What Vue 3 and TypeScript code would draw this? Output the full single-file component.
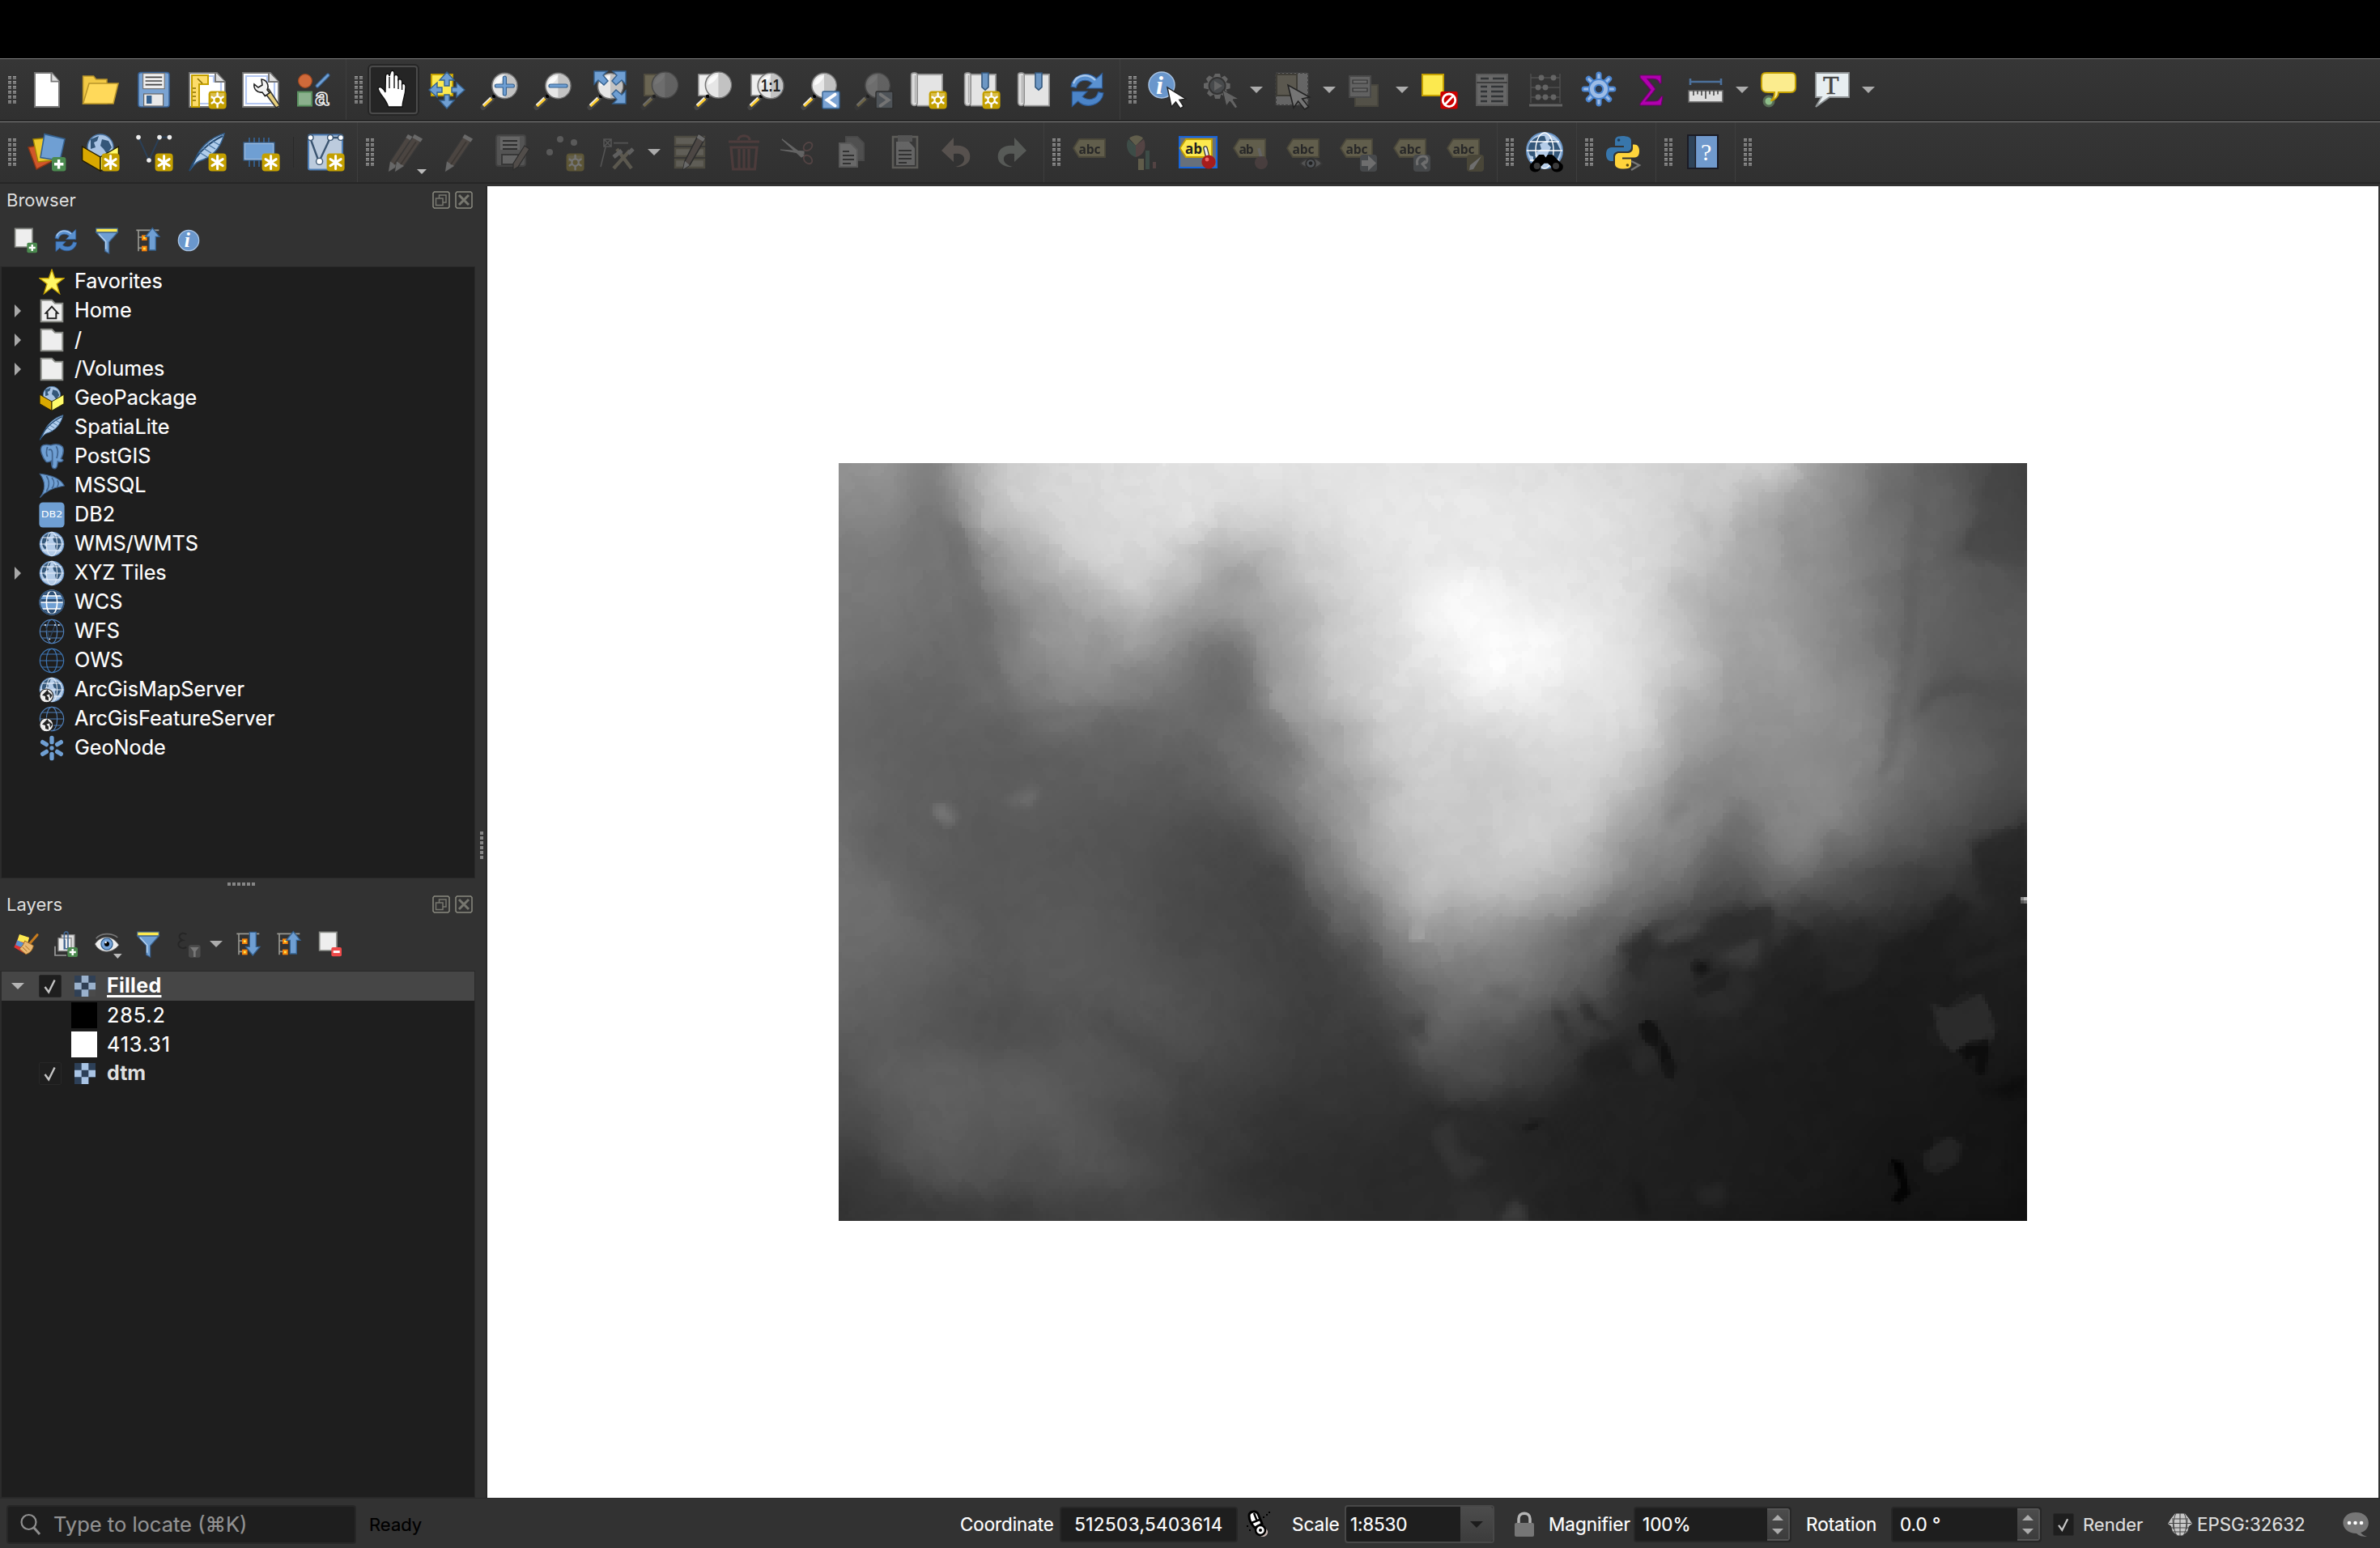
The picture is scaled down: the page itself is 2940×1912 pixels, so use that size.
<script setup lang="ts">
import { onMounted, ref } from 'vue'

interface Tool { icon: string; menu?: boolean; off?: boolean; active?: boolean; checked?: boolean; sep?: boolean }
interface Node { label: string; icon: string; arrow?: boolean }

const star = '<rect x="12.8" y="12.8" width="11" height="11" rx="2" fill="#c4a000"/><path d="M18.3 14.3v8M15 16.3l6.6 4M21.6 16.3l-6.6 4" stroke="#fff" stroke-width="1.5" stroke-linecap="round"/>'
const starOutline = '<rect x="12.8" y="12.8" width="11" height="11" rx="2" fill="#c4a000"/><path d="M14 14h8.600v2.500c-3 .5-6 .5-8.600 1.500z" fill="#d9bd4a"/><circle cx="18.3" cy="18.3" r="2.1" fill="#c4a000" stroke="#fff" stroke-width="1.100"/><path d="M18.3 14v2M18.3 20.600v2M14.8 16.400l1.5.9M20.3 19.300l1.5.9M21.800 16.400l-1.500.9M16.300 19.300l-1.500.9" stroke="#fff" stroke-width="1.200" stroke-linecap="round"/>'
const handle = '<path d="M1.4 22.8L6.8 17.6" stroke="#454545" stroke-width="3.4" stroke-linecap="round"/><path d="M1.6 22L6.6 17.4" stroke="#ffce2e" stroke-width="1.8"/><path d="M1.2 21.3l4.8-4.6" stroke="#eee" stroke-width=".8"/><path d="M7 17l2-2" stroke="#777" stroke-width="1.500"/><circle cx="8" cy="16" r="1.1" fill="#000"/>'
const glass = (cx: number, cy: number, r: number) =>
  `${handle}<circle cx="${cx}" cy="${cy}" r="${r}" fill="#e6e6e6" stroke="#777" stroke-width=".8"/><path d="M${cx} ${cy - r + .4}a${r - .4} ${r - .4} 0 0 1 0 ${2 * r - .8}z" fill="#c2c2c2"/><path d="M${cx - r + 1.5} ${cy}a${r - 1.5} ${r - 1.5} 0 0 1 ${r - 1.5} ${-r + 1.5}c-1 3-3 5-${r - 1.5} ${r - 1.5}z" fill="#fafafa"/>`
const scroll = '<path d="M4 2.5h17v19.3H5.5" fill="#e4e4e4" stroke="#9a9a9a" stroke-width=".9"/><path d="M1.8 2.8c0-1.8 3.8-1.8 3.8 0v17c0 2.6-3.8 2.6-3.8 0z" fill="#dcdcdc" stroke="#8d8d8d" stroke-width=".8"/><path d="M4.3 3v17" stroke="#aaa" stroke-width=".7"/>'
const ribbon = '<path d="M12.5 1.5h4v8.8l-2 1.8-2-1.8z" fill="#6d97c4" stroke="#35597f" stroke-width=".8"/>'
const cursor = '<path d="M12 10.5l2.6 12 2.6-3 2.8 4 2-1.3-2.6-4 4-.6z" fill="#fff" stroke="#222" stroke-width=".7"/>'
const refresh = '<path d="M1.5 10C2.5 2.5 12 0 17.2 5l3.6-3.2V11h-9.3l3-3.2C10.800 4.800 5.600 6 4.700 10.700z" fill="#5a91d0" stroke="#2d5d9b" stroke-width=".6"/><path d="M3 8C5 2.500 12 1.500 16.500 6" stroke="#a9c8ec" stroke-width="1.200" fill="none"/><path d="M21.500 14C20.500 21.500 11 24 5.800 19l-3.600 3.200V13h9.300l-3 3.200c3.700 3 8.900 1.800 9.800-2.900z" fill="#4b84c8" stroke="#2d5d9b" stroke-width=".6"/>'
const pencil = (dx: number) => `<g transform="translate(${dx} 0)"><path d="M14 1l5 2.800L7.500 20.500 2 24l1-6.300z" fill="#8a6a55" stroke="#444" stroke-width=".6"/><path d="M14 1l5 2.800-1.300 2-5-2.800z" fill="#d8d8d8"/><path d="M3 17.700l4.500 2.800L2 24z" fill="#d8d8d8"/><path d="M15 5.500L5.500 19.500" stroke="#59402f" stroke-width=".9"/></g>`
const tag = (txt: string) => `<path d="M1 9.500L4.500 4H20.500v11H4.500z" fill="#c9b75c" stroke="#86762f" stroke-width=".9"/><text x="4.300" y="12.800" font-family="Open Sans, sans-serif" font-weight="700" font-size="7.800" textLength="${txt.length * 4.500}" fill="#111">${txt}</text>`
const land = '<path d="M4 6c2-3 4-4 7-4l-1 3-2 1 1 3-3 1-1 3 2 2-1 2C3 15 2 10 4 6zM13 4l5 1 2 3 1 4-3 5-2 1-1-4 1-3-2-1-1-3 2-2z" fill="#345779"/>'
const globe = `<circle cx="12" cy="12" r="11" fill="#b4cce8" stroke="#6a95c6"/>${land}`
const mesh = (c: string, w = .9) => `<g fill="none" stroke="${c}" stroke-width="${w}"><circle cx="12" cy="12" r="11"/><ellipse cx="12" cy="12" rx="5" ry="11"/><path d="M1 12h22M3 6h18M3 18h18"/></g>`
const box = '<circle cx="12" cy="9" r="8" fill="#a9c4e4" stroke="#4b76a5" stroke-width=".7"/><path d="M6 4l5-2-1 3-2 1 1 3-3 1zM13 4l4 1 2 4-3 4-2-3-2-2z" fill="#345779"/><path d="M.8 8.500L12 15v8.500L.8 17z" fill="#d9a800" stroke="#221c00" stroke-width=".7"/><path d="M23.200 8.500L12 15v8.500L23.200 17z" fill="#fffb6b" stroke="#221c00" stroke-width=".7"/>'
const feather = '<path d="M22.500.500C14 3 7 9 4 18l-3 5.500c2-3 4-5 6-6 7-2 13-7 15.500-17z" fill="#b1cdeb" stroke="#35618f" stroke-width=".7"/><path d="M1 23.500C4 15 11 7 21.500 2" stroke="#24486e" stroke-width="1" fill="none"/><path d="M7 12l5 3M9.500 9.500l5 3M12 7l5 3M15 5l4.500 2.500" stroke="#4a75a3" stroke-width=".7"/>'
const sheet = '<path d="M12 1.500h6L23 7v15.500H1v-21z" fill="#fff" stroke="#777" stroke-width=".9"/><path d="M3 3.500h13v3.300h4.500V20.500H3z" fill="none" stroke="#b5c8f2" stroke-width="1.100"/><path d="M17 1.500V7h6" fill="#ddd" stroke="#777"/>'
const funnel = '<path d="M2 4.500h20l-8 9V24l-3.700-2V13.500z" fill="#6f9fd3" stroke="#3c628e" stroke-width=".9"/><path d="M4.500 6l6.500 7v7" fill="none" stroke="#b9d3ef" stroke-width="1.100"/><rect x="2" y=".8" width="20" height="3.600" fill="#fce94f" stroke="#3c628e" stroke-width=".9"/>'
const treeBase = '<path d="M1 2.500h21M3 2.500V22M3 9h5M3 19h5" stroke="#999993" stroke-width="1.200" fill="none"/><rect x="6" y="7" width="5" height="5" fill="#f5820b"/><rect x="7.500" y="8.500" width="2" height="2" fill="#fce94f"/><rect x="6" y="17" width="5" height="5" fill="#f5820b"/><rect x="7.500" y="18.500" width="2" height="2" fill="#fce94f"/>'
const folder = '<path d="M2 2h10l3 3h7v17H2z" fill="#eee" stroke="#888a85" stroke-width="1.500"/>'
const miniEarth = '<circle cx="7" cy="17.500" r="6.300" fill="#eee" stroke="#222" stroke-width=".8"/><path d="M8 12l-5 5 3 1v3l3 1v-3l-2-2 3-1zM9.500 14l3 3-2 3z" fill="#222"/>'
const glob2 = '<g fill="none" stroke="#e5eef9" stroke-width=".8"><ellipse cx="12" cy="12" rx="5" ry="11"/><path d="M1 12h22M3 6h18M3 18h18"/></g>'

const icons: Record<string, string> = {
  newDoc: '<path d="M4.500 1.500H15l4.500 5.300V22.500h-15z" fill="#fff" stroke="#777"/><path d="M14.700 1.500v5.300h4.800" fill="#ddd" stroke="#777" stroke-width=".9"/>',
  open: '<path d="M1.300 20.500V3.500h6.500l1.500 2H16V20.500z" fill="#f2c945" stroke="#b9952a" stroke-width=".8"/><path d="M1.300 20.500L5 8h18l-3 12.500z" fill="#ffd95a" stroke="#b9952a" stroke-width=".8"/>',
  save: '<rect x="2.500" y="1.300" width="19" height="21.200" rx="1.500" fill="#7aa3d2" stroke="#3a659a" stroke-width=".8"/><rect x="5.300" y="1.800" width="13.300" height="9.500" fill="#eee" stroke="#777" stroke-width=".6"/><path d="M6.800 4.200h10.300M6.800 6.500h10.300M6.800 8.800h10.300" stroke="#444" stroke-width=".8"/><rect x="5.800" y="14.500" width="12" height="7.500" fill="#e9e9e9" stroke="#666" stroke-width=".6"/><rect x="7.500" y="15.500" width="3.200" height="5" fill="#35618f"/>',
  newLayout: `${sheet}<path d="M2.500 3h10v5.500H7v14H2.500z" fill="#fcdc6a" stroke="#c4a000"/><path d="M3 11h2M3 13.500h2M3 16h2M3 18.500h2M6 5l3 3" stroke="#8a7000" stroke-width=".8"/>${starOutline}`,
  layouts: `${sheet}<path d="M14 13l7.500 10 2.300-1.200L17 11.500z" fill="#e6ce7c" stroke="#333" stroke-width=".8"/><path d="M12.500 5.500c3 .2 5 3.500 3.500 6.500l1.500 1.800-2.800 2-1.700-2.300c-3 .5-5.500-2-5-5l2.500 2 2.500-1.500z" fill="#f3f3f3" stroke="#222" stroke-width=".8"/>`,
  style: '<circle cx="6.500" cy="6.500" r="4.200" fill="#d06a3a" stroke="#9e4820" stroke-width=".6"/><path d="M14 9.500l6.500-6.500" stroke="#36608f" stroke-width="2.600" stroke-linecap="round"/><path d="M14 9.500l6.500-6.500" stroke="#6f9fd3" stroke-width="1.400" stroke-linecap="round"/><rect x="2" y="13.300" width="8.500" height="8.500" fill="#8bb08d" stroke="#5b9160"/><text x="12.600" y="21.500" font-size="15" font-family="Liberation Sans, sans-serif" font-weight="700" fill="#333" stroke="#eee" stroke-width=".8">a</text>',
  hand: '<path d="M8.800 22.500C7.500 17.500 3 14.500 2.500 11c1-1.500 3-.5 4.500 2.500L7.200 3.500c.3-2 2-2 2.300 0l.8-2.500c.5-1.500 2.200-1 2.200.5v2c.7-1.300 2.500-1 2.500.8v1.500c1-.8 2.300-.3 2.300 1.200v1.500c1-.8 2.200 0 2.200 1.500 0 6-2 8-2 12.500z" fill="#fff" stroke="#111" stroke-width=".7"/><path d="M9.500 4v7M12.500 3.500v7.500M15 5v6.500M17.300 8v4" stroke="#111" stroke-width=".7"/>',
  panSel: '<rect x="2.500" y="2.500" width="13" height="13" fill="#fce94f" stroke="#c4a000"/><g fill="#6f9fd3" stroke="#35618f" stroke-width=".7"><path d="M12 1l4.500 5H13.500v3.500h-3V6H7.500zM12 23.500L7.500 18.500H10.500V15h3v3.500h3zM1 12l5-4.500V10.500h3v3H6v3zM23 12l-5 4.500V13.500h-3v-3h3V7.500z"/></g>',
  zoomIn: `${glass(14.700, 9.500, 7.800)}<path d="M14.700 4.500v10M9.700 9.500h10" stroke="#35618f" stroke-width="2.600" stroke-linecap="round"/><path d="M14.700 4.500v10M9.700 9.500h10" stroke="#6f9fd3" stroke-width="1.500" stroke-linecap="round"/>`,
  zoomOut: `${glass(14.700, 9.500, 7.800)}<path d="M10 9.500h9.500" stroke="#35618f" stroke-width="2.600" stroke-linecap="round"/><path d="M10 9.500h9.500" stroke="#6f9fd3" stroke-width="1.500" stroke-linecap="round"/>`,
  zoomFull: `${glass(14, 9.700, 7.800)}<g fill="#6f9fd3" stroke="#35618f" stroke-width=".7"><path d="M4 .5h8L9.500 3l3 3.500-2.500 2.500-3.500-3L4 8.500zM23.500.5h-8L18 3l-3 3.500L17.500 9l3.500-3 2.500 2.500zM23.500 20.500h-8L18 18l-3-3.500 2.500-2.500 3.500 3 2.500-2.500z"/></g>`,
  zoomSel: `<rect x="2" y="2.500" width="12" height="13" fill="#e8cf6d" stroke="#96803a"/>${glass(14.700, 9, 8)}`,
  zoomLayer: `<rect x="2.500" y="2.500" width="11" height="13" fill="#eee" stroke="#999" stroke-width=".8"/>${glass(14.700, 9, 8)}`,
  zoomNative: `<rect x="2" y="2.500" width="11" height="13" fill="#eee" stroke="#888" stroke-width=".8"/>${glass(14, 9.500, 7.900)}<text x="8" y="13" font-family="Liberation Sans, sans-serif" font-weight="700" font-size="11" textLength="12" lengthAdjust="spacingAndGlyphs" fill="#222">1:1</text>`,
  zoomLast: `${glass(14, 9.300, 7.600)}<rect x="13" y="13" width="10.500" height="10.500" rx=".8" fill="#7ba3d3" stroke="#35618f" stroke-width=".7"/><path d="M20.800 14.800L15.800 18.300l5 3.500" stroke="#fff" stroke-width="1.900" fill="none" stroke-linecap="round"/>`,
  zoomNext: `${glass(14, 9.300, 7.600)}<rect x="13" y="13" width="10.500" height="10.500" rx=".8" fill="#839bb5" stroke="#222" stroke-width=".7"/><path d="M15.800 14.800l5 3.500-5 3.500" stroke="#fff" stroke-width="1.900" fill="none" stroke-linecap="round"/>`,
  newMap: scroll + starOutline,
  newMark: scroll + ribbon + starOutline,
  marks: scroll + ribbon,
  refresh,
  info: `<circle cx="8.500" cy="9" r="8" fill="#6a97cc" stroke="#a9c4e4" stroke-width=".7"/><text x="5" y="14.500" font-family="Liberation Serif, serif" font-style="italic" font-weight="700" font-size="16" fill="#fff">i</text>${cursor}`,
  action: `<path d="M8.500 1h3l.6 2.500 2.300-1.300 2 2-1.200 2.300 2.600.6v3l-2.600.7 1.300 2.300-2 2-2.400-1.300-.6 2.700h-3l-.7-2.700-2.300 1.300-2-2 1.300-2.300L1.500 10V7l2.700-.6-1.300-2.300 2-2L7.200 3.500z" transform="translate(0 1)" fill="#ccc"/><circle cx="9.800" cy="9.500" r="5" fill="#6c7a86" stroke="#333"/><path d="M8 6.500l5 3-5 3z" fill="#ccc"/><path d="M13 12l2.400 10 2.200-3 3.400 4.500 1.300-1-2.800-4.500 3.500-.500z" fill="#ccc" stroke="#333" stroke-width=".5"/>`,
  select: `<path d="M1 1.500h20v20H1z" fill="#d0d0d0" stroke="#555" stroke-dasharray="1.500 1"/><rect x="1.500" y="2.500" width="12.500" height="13" fill="#b5a678" stroke="#5b5130"/><path d="M8.500 9l3.500 14 2.800-4 4 5 2.500-1.500-4-5 4.500-1z" fill="#fff" stroke="#000" stroke-width=".8"/>`,
  form: '<rect x="5" y="9" width="14" height="13" fill="#9f9364" stroke="#7b7047"/><rect x="1.500" y="3.500" width="13" height="13" fill="#c5c5c5" stroke="#777"/><path d="M3.500 6h9v2h-9zM3.500 11h9v2h-9z" fill="#ddd" stroke="#333" stroke-width=".6"/>',
  deselect: '<rect x="1.500" y="2.500" width="13" height="13" fill="#fce94f" stroke="#c4a000"/><rect x="12.700" y="13" width="10.600" height="10.800" rx="1" fill="#cc0000"/><circle cx="18" cy="18.400" r="3.900" fill="none" stroke="#fff" stroke-width="1.400"/><path d="M15.500 21l5-5.200" stroke="#fff" stroke-width="1.400"/>',
  table: '<rect x="2" y="2.500" width="19" height="19" fill="#d5d5d5" stroke="#a9a9a9"/><path d="M2 7.500h19" stroke="#555"/><path d="M4.500 5h5M12 5h7M4.500 10h4M11 10h7.500M4.500 13h4M11 13h7.500M4.500 16h4M11 16h7.500M4.500 19h4M11 19h7.500" stroke="#2d3a45" stroke-width="1.300"/>',
  abacus: '<path d="M2.500 2v18M20.500 2v18M2.500 4.500h18M2.500 10.500h18M2.500 16.500h18" stroke="#888" stroke-width=".7" fill="none"/><path d="M1.500 21.500h20.500" stroke="#ccc" stroke-width="1.500"/><g fill="#ccc"><circle cx="9" cy="4.500" r="1.700"/><circle cx="16.500" cy="4.500" r="1.700"/><circle cx="7" cy="10.500" r="1.700"/><circle cx="11.500" cy="10.500" r="1.700"/><circle cx="7" cy="16.500" r="1.700"/><circle cx="11.500" cy="16.500" r="1.700"/><circle cx="16.500" cy="16.500" r="1.700"/></g>',
  cog: '<g stroke="#4a84cf" stroke-width="3.600" stroke-linecap="round"><path d="M11.500 2.600v17.800M2.600 11.500h17.800M5.200 5.200l12.600 12.600M17.800 5.200L5.200 17.800"/></g><g stroke="#9dbce6" stroke-width="1.600" stroke-linecap="round"><path d="M11.500 2.800v17.400M2.800 11.500h17.400M5.400 5.400l12.200 12.200M17.600 5.400L5.400 17.600"/></g><circle cx="11.500" cy="11.500" r="6" fill="#9dbce6" stroke="#4a84cf" stroke-width="1"/><circle cx="11.500" cy="11.500" r="2.600" fill="#2d3a4c" stroke="#4a84cf"/>',
  sigma: '<path d="M4 3h13v5h-1c-.5-2-1.500-2.800-4-2.800H8.500l5 6.300-6 7.500h5c2.500 0 3.500-.8 4.500-3h1l-1 5.500H4v-1l6.500-8.500L4 4.500z" fill="#b000ae" stroke="#6d006b" stroke-width=".6"/>',
  ruler: '<path d="M2 7h19M2 5v4M21 5v4" stroke="#4c719c" stroke-width="1.300"/><rect x="1" y="12.500" width="21" height="7" fill="#ddd" stroke="#666" stroke-width=".8"/><path d="M4 12.500v3M6.500 12.500v2.200M9 12.500v3M11.500 12.500v5M14 12.500v2.200M16.500 12.500v3M19 12.500v2.200" stroke="#444" stroke-width=".8"/>',
  tip: '<ellipse cx="5.500" cy="19" rx="3" ry="3" fill="#8fbf8a" stroke="#576b55" stroke-width="1.500"/><path d="M4 1.500h15.500c2 0 2.500 1 2.500 3v6c0 2-1 3-3 3h-7.500c0 2.500-2 4.500-4.800 5.300 2-1.500 2.300-3.300 2.300-5.300H5c-3 0-4-1-4-3.500v-5c0-2.500.5-3.500 3-3.500z" fill="#fbec8e" stroke="#c4a000"/>',
  text: '<path d="M1.500 1.500h20.500v15H10L1.500 22.500l3.500-6H1.500z" fill="#e7eef1" stroke="#8f9496" stroke-width=".9"/><text x="6" y="14.500" font-family="Liberation Serif, serif" font-size="16" fill="#444" stroke="#444" stroke-width=".3">T</text>',
  dataSrc: '<path d="M.5 9l11-2 3 11-9 4.500z" fill="#d0562a" stroke="#8d3615" stroke-width=".7"/><path d="M3.500 4l11-1 1 14-9 1z" fill="#edc92b" stroke="#a48600" stroke-width=".7"/><path d="M10.500.8l12.500 3-3 13.500-12-2z" fill="#6f9fd3" stroke="#35618f" stroke-width=".8"/><rect x="15" y="15" width="8.700" height="8.700" rx="1.500" fill="#4b8a4f"/><path d="M19.300 16.500v5.800M16.500 19.400h5.700" stroke="#fff" stroke-width="1.700"/>',
  geopkg: box, geopkgNew: box + star,
  shp: `<path d="M2.500 2.800L9 17 15.500 2.800H22" fill="none" stroke="#2b4058" stroke-width="1"/><g fill="#eee"><circle cx="2.500" cy="2.800" r="1.400"/><circle cx="9" cy="17" r="1.400"/><circle cx="15.500" cy="2.800" r="1.400"/><circle cx="21.700" cy="2.800" r="1.400"/></g>${star}`,
  spatialNew: feather + star, feather,
  memory: `<path d="M5 3v18M8 3v18M11 3v18M14 3v18M17 3v18" stroke="#35618f" stroke-width=".9"/><rect x="2" y="6.500" width="18" height="10" fill="#6f9fd3" stroke="#a9c4e4" stroke-width=".8"/><rect x="1.500" y="6" width="19" height="11" fill="none" stroke="#35618f" stroke-width=".6"/>${star}`,
  virtual: `<rect x="1.500" y="1.300" width="21" height="21.500" rx="1" fill="#bccbdd" stroke="#4e7fb8"/><path d="M2.500 3L8 18 15 3M8 18l-5.500-15M15 3h6" fill="none" stroke="#3b5571" stroke-width="1.200"/><g fill="#fff" stroke="#3b5571" stroke-width=".7"><circle cx="2.800" cy="3" r="1.700"/><circle cx="8.300" cy="17.700" r="2"/><circle cx="15" cy="3" r="1.700"/><circle cx="21.500" cy="3" r="1.700"/></g>${star}`,
  edits: pencil(0) + pencil(4), edit: pencil(2),
  saveEdits: '<rect x="2.500" y="1.500" width="18" height="19" rx="1.500" fill="#999" stroke="#666"/><path d="M5 2.500h12v8H5z" fill="#ccc"/><path d="M6.500 5h9M6.500 7.500h9M6.500 10h9" stroke="#222"/><path d="M6 13.500h10v6H6z" fill="#ccc" stroke="#444"/><path d="M20 8l3 2-7 11-3 2v-4z" fill="#9a8272" stroke="#222" stroke-width=".6"/>',
  points: `<g fill="#aaa"><circle cx="9" cy="4" r="2"/><circle cx="17.500" cy="6" r="2"/><circle cx="2.500" cy="12" r="2"/></g>${starOutline}`,
  vertex: '<g fill="none" stroke="#999" stroke-width=".8"><path d="M3 4h4.500v4.500H3zM3 4l4.500 4.500M7.500 4L3 8.500M9 6.300h9M4 9L1 21"/></g><path d="M9 22L19 11M11 10l9 12" stroke="#b9a878" stroke-width="2.200"/><path d="M9 15l5-4M18 13l3-3" stroke="#bbb" stroke-width="2.500"/>',
  attrs: '<path d="M2 2.500h18v5H2zM2 9.500h18v5H2zM2 16.500h18v5H2z" fill="#c2b896" stroke="#8d8050" stroke-width="1.200"/><path d="M16.500 1l4 2.500L11 20l-4 2.500 1-5z" fill="#8e6f60" stroke="#222" stroke-width=".8"/><path d="M16.500 1l4 2.500-1.200 2-4-2.500zM8 17.500L11 20l-4 2.500z" fill="#ddd"/>',
  trash: '<g fill="none" stroke="#a04848" stroke-width="1.600"><path d="M2 5.500h19M8 4.500c0-3.500 7-3.500 7 0M3.500 9h16l-1.300 13.500H4.800zM8.500 10v12M11.500 10v12M14.500 10v12"/></g>',
  cut: '<path d="M2 4l13.500 10L14 15zM1 10.500l14.500 1v1.500z" fill="#ccc" stroke="#ccc" stroke-width=".6"/><g fill="none" stroke="#b26060" stroke-width=".9"><ellipse cx="18" cy="8.500" rx="3" ry="2.200" transform="rotate(-40 18 8.500)"/><ellipse cx="18" cy="16.500" rx="3" ry="2.200" transform="rotate(45 18 16.500)"/></g>',
  copy: '<path d="M8.500 2.500h7l4 4V17h-11z" fill="#8b8b8b" stroke="#777"/><path d="M4.500 6.500h7l4 4v10.500h-11z" fill="#ddd" stroke="#aaa"/><path d="M6.500 11.500h4M6.500 14h7M6.500 16.500h7M6.500 19h5" stroke="#333"/>',
  paste: '<path d="M4.500 2.500h15v19h-15z" fill="#444" stroke="#b8b3a0" stroke-width="1.300"/><path d="M7.500 1.500h9v4h-9z" fill="#999"/><path d="M6.500 5.500h8l3.500 4V20H6.500z" fill="#ccc"/><path d="M8 11h8M8 13.500h8M8 16h8M8 18.500h5" stroke="#333"/>',
  undo: '<path d="M1.500 11L9 3v5c7-1 11 3 10 8-.5 3-4 5.500-9 5 4-1 6-3 5.500-5.500S12 12.500 9 13v5z" fill="#ad9080"/>',
  redo: '<path d="M21 11l-7.500-8v5c-7-1-11 3-10 8 .5 3 4 5.500 9 5-4-1-6-3-5.500-5.500S10.500 12.500 13.500 13v5z" fill="#9fae9f"/>',
  label: tag('abc'),
  diagram: '<path d="M6.500 8L2.500 3.500C5 1 9 1 11 3.500z" fill="#c9b75c"/><path d="M6.500 8L2 4C-.5 8 2 14 6.500 15z" fill="#3d8a70"/><path d="M6.500 8l5-4c2 5 0 10-5 11z" fill="#b26060"/><rect x="8" y="16" width="3.500" height="7" fill="#c9b75c"/><rect x="12.500" y="11" width="2.500" height="11.500" fill="#3d8a70"/><rect x="17" y="18" width="2" height="4" fill="#b26060"/>',
  pinned: '<path d="M.8 9.500L4.500 4H20.500v11H4.500z" fill="#fce94f" stroke="#c4a000" stroke-width=".9"/><text x="4" y="13" font-family="Open Sans, sans-serif" font-weight="700" font-size="8.500" fill="#222">ab</text><path d="M16.500 9.500l1.500 6" stroke="#333" stroke-width="2.800" stroke-linecap="round"/><path d="M16.500 9.500l1.300 5" stroke="#eee" stroke-width="1.500" stroke-linecap="round"/><circle cx="18.500" cy="18" r="4.300" fill="#a61c1c"/><circle cx="17.500" cy="16.500" r="1.200" fill="#e66"/>',
  pin: tag('ab') + '<path d="M16.500 9.500l1.500 6" stroke="#ccc" stroke-width="1.800"/><circle cx="18" cy="18.500" r="4" fill="#855"/>',
  showHide: tag('abc') + '<path d="M9 19c4-4.500 10-4.500 13.500 0-4 4-9 4-13.500 0z" fill="#999" stroke="#444"/><circle cx="15.500" cy="19" r="2.900" fill="#8ca0b5" stroke="#222"/><circle cx="15.500" cy="18.800" r="1.200" fill="#000"/>',
  moveLabel: tag('abc') + '<rect x="13" y="13.500" width="10.500" height="10.500" rx="2" fill="#6e7a86"/><path d="M14 17h4v-3l5 4.800-5 4.700v-3h-4z" fill="#eee"/>',
  rotLabel: tag('abc') + '<rect x="13" y="13.500" width="10.500" height="10.500" rx="2" fill="#6e7a86"/><path d="M15.500 20c-2-6 6-7 6-3.500 0 2-1.500 2.500-3 2.500M20.500 17.500l-2 1.700 2.500 3" fill="none" stroke="#eee" stroke-width="1.500"/>',
  chgLabel: tag('abc') + '<rect x="13" y="13.500" width="10.500" height="10.500" rx="2" fill="#80712c"/><path d="M22 14.500l-5 8-2.500.5.500-3z" fill="#eee"/>',
  metasearch: '<circle cx="12" cy="11" r="11" fill="#b4cce8" stroke="#6a95c6"/><path d="M5 4c3-2 5-2 7-2l1 3-4 2 1 3-3 2-1 3-3-1C1 10 2 7 5 4zM15 4l4 1 3 6-2 5-4 1-2-4 2-4-2-2zM5 14l5 2-1 4-4-3z" fill="#345779"/><g fill="none" stroke="#fff" stroke-width=".7"><ellipse cx="12" cy="11" rx="5.500" ry="11"/><path d="M1 11h22M3 5.500h18M3 17h18"/></g><path d="M8.500 13.500h3l1.200 1.700 1.200-1.700h3l6.300 6.200c1 3-1.500 4.500-3.500 4.500-2.500 0-3.700-1.700-3.700-3.500l-2-1.800h-2.200l-2 1.800c0 2-1.500 3.500-3.700 3.500s-4-2-3-4.500z" fill="#000"/><circle cx="7.300" cy="20.500" r="2" fill="#3a3a3a"/><circle cx="19" cy="20.500" r="2" fill="#3a3a3a"/>',
  python: '<path d="M11 2c-4 0-4.500 1.500-4.500 3v3h5.500v1H4.500C2 9 1 11 1 13.300s1 4.200 3 4.200h1.500V14.500c0-1.800 1.500-3 3.500-3h5c1.500 0 2.500-1.300 2.500-2.500V5c0-2-2-3-5.500-3z" fill="#3876ab"/><path d="M12 22.300c4 0 4.500-1.500 4.500-3v-3H11v-1h7.500c2.500 0 3-2 3-4 0-2.300-1-4-3-4H17.500V9.500c0 2-1.500 3-3.500 3H9c-1.500 0-2.500 1.300-2.500 2.500v4.300c0 2 2 3 5.500 3z" fill="#ffd43b"/><circle cx="8.800" cy="4.500" r=".9" fill="#1e3c56"/><circle cx="14.200" cy="20" r=".9" fill="#5a4a10"/><path d="M16.500 17.500l5 2.500-5 3" fill="none" stroke="#777" stroke-width="1.200"/>',
  help: '<rect x="2.500" y="1.500" width="18.500" height="20.500" fill="#7099cc" stroke="#1b1b24"/><rect x="3" y="2" width="4" height="19.500" fill="#2f4358"/><path d="M7.200 2v19.500" stroke="#1b1b24" stroke-width=".7"/><text x="10.500" y="17" font-family="Liberation Serif, serif" font-size="15" fill="#fff">?</text>',
  addLayer: '<path d="M2 1h16v17H2z" fill="#eee" stroke="#888a85" stroke-width="1.300"/><rect x="13" y="14" width="9.500" height="9.500" rx="1.500" fill="#4b8a4f"/><path d="M17.800 15.700v6M14.800 18.700h6" stroke="#fff" stroke-width="1.800"/>',
  funnel,
  collapse: `${treeBase}<path d="M16 .5l6.500 8h-3.500V21h-6V8.500H9.500z" fill="#6f9fd3" stroke="#35618f"/>`,
  expand: `${treeBase}<path d="M16 22.500l-6.500-8H13V1h6v13.500h3.500z" fill="#6f9fd3" stroke="#35618f"/>`,
  infoSm: '<circle cx="12" cy="12" r="9.500" fill="#6a97cc" stroke="#a9c4e4" stroke-width="1"/><text x="8" y="18" font-family="Liberation Serif, serif" font-style="italic" font-weight="700" font-size="19" fill="#fff">i</text>',
  favorite: '<path d="M12 .8l2.800 8h8.400l-6.700 5.200 2.700 9-7.200-5.500L4.800 23l2.700-9L.8 8.800h8.400z" fill="#fff765" stroke="#c4a000"/>',
  home: `${folder}<path d="M6.500 14L12 8l5.500 6H16v5H8v-5z" fill="none" stroke="#222" stroke-width="1.500"/>`,
  folder,
  postgis: '<path d="M3 2c3-2 6-1 8-.5 3-1 8-1.500 11 1.500 1.500 3 0 8-1.500 11 1.500.5 2 1 2 1.500-1 1.500-3.500 1.500-5 1-.5 3 0 6-2.500 6.500-3 .5-3-2-3.500-7-2 1-4 1.500-5 .5C3.500 13 0 5 3 2z" fill="#6f9fd3" stroke="#40648f" stroke-width="1.100"/><path d="M8 3c-1 3-1 7 0 9M16 2.500c2 3 1.500 8 .5 11M12.500 13v7M9 6c2-1.500 3.500 0 3.500 3v4" fill="none" stroke="#40648f" stroke-width="1.300"/>',
  mssql: '<path d="M1 1c9 1 19 4 22.500 11C17 13 7 16 1 23c6-8 5-15 0-22z" fill="#6f9fd3" stroke="#40648f" stroke-width=".8"/><path d="M7 3c3 4 3 10 0 14M12 4.500c2.500 3 2.500 7 0 10M17 7c1.500 2 1.500 4 0 6" fill="none" stroke="#40648f" stroke-width="1.200"/>',
  db2: '<rect x=".3" y=".3" width="23.400" height="23.400" rx="3.500" fill="#6f9fd3"/><text x="2" y="14.600" font-family="DejaVu Sans, sans-serif" font-size="8.500" textLength="20" lengthAdjust="spacingAndGlyphs" fill="#fff">DB2</text>',
  wms: globe + glob2,
  wcs: `<circle cx="12" cy="12" r="11" fill="#6f9fd3"/><path d="M3 6C7 0 17 0 21 6zM3 18c4 6 14 6 18 0zM1 9h22v3H1z" fill="#2d4f75"/>${mesh('#fff', 1.200)}<circle cx="12" cy="12" r="11.100" fill="none" stroke="#2d4f75" stroke-width="1.500"/>`,
  wfs: `${mesh('#4f7fb8')}<path d="M6 6l4 13 5-13h3" stroke="#2e4560" fill="none"/><g fill="#fff"><circle cx="6" cy="6" r=".7"/><circle cx="10" cy="19" r=".7"/><circle cx="15" cy="6" r=".7"/><circle cx="18.500" cy="6" r=".7"/></g>`,
  ows: mesh('#3f77b5'),
  arcMap: globe + glob2 + miniEarth, arcFeat: mesh('#4f7fb8') + miniEarth,
  geonode: '<g stroke="#6f9fd3" stroke-width="4" stroke-linecap="round"><path d="M12 2.500v4M12 17.500v4M3.500 6.500l3.500 2.200M17 15.300l3.500 2.200M20.500 6.500L17 8.700M7 15.300l-3.500 2.200"/></g><circle cx="12" cy="12" r="2" fill="#6f9fd3"/>',
  styling: '<path d="M6 4l9 2-4 15-10-6z" fill="#e23030"/><path d="M6 3l9 3-1.500 5.500L4 9z" fill="#fce94f"/><path d="M4 8.500l9 4-1.500 4L2.500 13z" fill="#5a91d0"/><path d="M22.500 3.500L16 11" stroke="#c87c1e" stroke-width="2.300" stroke-linecap="round"/><path d="M11 9l8 4.500c-1 5-4 7-7 8l-6-5c2-1.500 4-4 5-7.500z" fill="#e9b873" stroke="#a26a1e" stroke-width=".7"/><path d="M9 15l4 4M11.500 13.500l4 4" stroke="#a26a1e" stroke-width=".7"/>',
  group: '<path d="M1.500 14v8.500H12" fill="none" stroke="#999" stroke-width="1.300"/><path d="M7.500 3.500h12v12h-12z" fill="#ddd" stroke="#888"/><path d="M4.500 6.500h12v12h-12z" fill="#eee" stroke="#888"/><path d="M10 17V2.500c0-2.500 3.500-2.500 3.500 0V15c0 2-3 2-3 0V8" fill="none" stroke="#40648f" stroke-width="1.200"/><rect x="13" y="15" width="9.500" height="9" rx="1.500" fill="#4b8a4f"/><path d="M17.800 16.500v6M14.800 19.500h6" stroke="#fff" stroke-width="1.800"/>',
  eye: '<path d="M1 12c5-8 16-9 22 1-5 7-17 9-22-1z" fill="#eee" stroke="#777" stroke-width=".7"/><circle cx="12" cy="12" r="5.300" fill="#76a3d8" stroke="#35618f"/><circle cx="12" cy="12" r="2.300" fill="#000"/><circle cx="11" cy="10.500" r=".9" fill="#fff"/><path d="M2 7c4-5 14-6 20-1" fill="none" stroke="#777" stroke-width="1.200"/><path d="M18 21h8l-4 4.500z" fill="#bbb"/>',
  filterExp: '<path d="M10 3C5-.5 0 6 6.500 8.500-1 10 3 18.500 10 15" fill="none" stroke="#262626" stroke-width="1.500"/><rect x="12" y="13" width="11" height="11.500" rx="2" fill="#4b4b4b"/><path d="M13.500 15h8l-3 4v5h-2v-5z" fill="#777"/>',
  removeLayer: '<path d="M2 1h16v17H2z" fill="#eee" stroke="#888a85" stroke-width="1.300"/><rect x="13" y="15" width="9.500" height="8.500" rx="1.500" fill="#ef4949" /><path d="M14.800 19.200h6" stroke="#fff" stroke-width="2.200"/>',
  raster: '<path d="M0 0h24v24H0z" fill="#2d4058"/><path d="M8 0h8v8H8zM0 8h8v8H0zM16 8h8v8h-8zM8 16h8v8H8z" fill="#a9c4e4"/><path d="M16.500 16.500H24V24h-7.500z" class="gap"/>',
  float: '<path d="M2.500 1h17l1.500 1.500v17L19.500 21h-17L1 19.500v-17z" fill="none" stroke="#8b8b80" stroke-width="1.500"/><path d="M4.500 9h8.500v8.500H4.500zM8.500 9V5h8.500v9h-4" fill="none" stroke="#77776f" stroke-width="1.500"/>',
  close: '<path d="M2.500 1h17l1.500 1.500v17L19.500 21h-17L1 19.500v-17z" fill="none" stroke="#8b8b80" stroke-width="1.500"/><path d="M5 5l12 12M17 5L5 17" stroke="#77776f" stroke-width="3"/>',
}

const rowOne: Tool[][] = [
  [{ icon: 'newDoc' }, { icon: 'open' }, { icon: 'save' }, { icon: 'newLayout' }, { icon: 'layouts' }, { icon: 'style' }],
  [{ icon: 'hand', active: true }, { icon: 'panSel' }, { icon: 'zoomIn' }, { icon: 'zoomOut' }, { icon: 'zoomFull' }, { icon: 'zoomSel', off: true },
    { icon: 'zoomLayer' }, { icon: 'zoomNative' }, { icon: 'zoomLast' }, { icon: 'zoomNext', off: true }, { icon: 'newMap' }, { icon: 'newMark' }, { icon: 'marks' }, { icon: 'refresh' }],
  [{ icon: 'info' }, { icon: 'action', off: true, menu: true }, { icon: 'select', off: true, menu: true }, { icon: 'form', off: true, menu: true }, { icon: 'deselect' },
    { icon: 'table', off: true }, { icon: 'abacus', off: true }, { icon: 'cog' }, { icon: 'sigma' }, { icon: 'ruler', menu: true }, { icon: 'tip' }, { icon: 'text', menu: true }],
]
const rowTwo: Tool[][] = [
  [{ icon: 'dataSrc' }, { icon: 'geopkgNew' }, { icon: 'shp' }, { icon: 'spatialNew' }, { icon: 'memory' }, { icon: 'virtual', sep: true }],
  [{ icon: 'edits', off: true }, { icon: 'edit', off: true }, { icon: 'saveEdits', off: true }, { icon: 'points', off: true }, { icon: 'vertex', off: true, menu: true },
    { icon: 'attrs', off: true }, { icon: 'trash', off: true }, { icon: 'cut', off: true }, { icon: 'copy', off: true }, { icon: 'paste', off: true }, { icon: 'undo', off: true }, { icon: 'redo', off: true }],
  [{ icon: 'label', off: true }, { icon: 'diagram', off: true }, { icon: 'pinned', checked: true }, { icon: 'pin', off: true }, { icon: 'showHide', off: true }, { icon: 'moveLabel', off: true }, { icon: 'rotLabel', off: true }, { icon: 'chgLabel', off: true }],
  [{ icon: 'metasearch' }], [{ icon: 'python' }], [{ icon: 'help' }], [],
]
const browserTools = ['addLayer', 'refresh', 'funnel', 'collapse', 'infoSm']
const layerTools = ['styling', 'group', 'eye', 'funnel', 'filterExp', 'expand', 'collapse', 'removeLayer']
const nodes: Node[] = [
  { label: 'Favorites', icon: 'favorite' }, { label: 'Home', icon: 'home', arrow: true }, { label: '/', icon: 'folder', arrow: true },
  { label: '/Volumes', icon: 'folder', arrow: true }, { label: 'GeoPackage', icon: 'geopkg' }, { label: 'SpatiaLite', icon: 'feather' },
  { label: 'PostGIS', icon: 'postgis' }, { label: 'MSSQL', icon: 'mssql' }, { label: 'DB2', icon: 'db2' }, { label: 'WMS/WMTS', icon: 'wms' },
  { label: 'XYZ Tiles', icon: 'wms', arrow: true }, { label: 'WCS', icon: 'wcs' }, { label: 'WFS', icon: 'wfs' }, { label: 'OWS', icon: 'ows' },
  { label: 'ArcGisMapServer', icon: 'arcMap' }, { label: 'ArcGisFeatureServer', icon: 'arcFeat' }, { label: 'GeoNode', icon: 'geonode' },
]

// Terrain brightness on a regular 25 x 17 lattice, north row first.
const terrain: number[][] = [
  [145, 148, 130, 188, 210, 218, 222, 224, 226, 227, 228, 228, 228, 226, 224, 220, 214, 210, 206, 198, 150, 115, 100, 80, 62],
  [135, 132, 122, 172, 204, 214, 220, 222, 216, 218, 224, 229, 232, 232, 230, 226, 220, 205, 195, 162, 145, 115, 100, 85, 65],
  [125, 122, 118, 145, 182, 205, 212, 200, 178, 190, 214, 224, 232, 232, 230, 226, 220, 203, 178, 160, 140, 118, 100, 88, 78],
  [120, 118, 112, 122, 152, 168, 190, 172, 158, 170, 206, 222, 246, 248, 236, 228, 222, 198, 170, 158, 140, 115, 100, 90, 85],
  [115, 112, 105, 113, 140, 148, 150, 138, 122, 160, 196, 216, 233, 250, 248, 238, 222, 198, 163, 158, 140, 118, 96, 90, 88],
  [105, 102, 100, 104, 118, 122, 118, 112, 114, 156, 186, 209, 222, 235, 235, 228, 218, 182, 152, 150, 145, 125, 98, 85, 82],
  [102, 98, 96, 94, 96, 98, 98, 98, 112, 128, 162, 196, 210, 208, 214, 216, 206, 168, 145, 143, 138, 125, 100, 90, 78],
  [105, 98, 95, 92, 93, 92, 90, 88, 100, 120, 150, 186, 203, 201, 206, 208, 180, 140, 128, 136, 137, 120, 100, 85, 72],
  [108, 98, 92, 88, 88, 85, 82, 77, 76, 94, 138, 176, 196, 200, 205, 190, 155, 128, 112, 128, 118, 95, 80, 68, 48],
  [110, 108, 95, 88, 88, 87, 82, 74, 70, 72, 112, 160, 185, 188, 182, 158, 122, 100, 80, 92, 82, 70, 58, 48, 38],
  [108, 105, 98, 88, 90, 88, 82, 74, 70, 67, 80, 120, 150, 148, 138, 112, 85, 66, 54, 54, 50, 42, 38, 32, 29],
  [102, 98, 92, 85, 88, 88, 85, 78, 72, 65, 65, 88, 112, 118, 108, 86, 60, 50, 42, 35, 32, 28, 27, 26, 28],
  [92, 92, 85, 80, 80, 85, 85, 80, 72, 64, 60, 62, 92, 92, 78, 60, 45, 35, 35, 30, 26, 24, 25, 26, 24],
  [82, 92, 95, 92, 90, 85, 80, 72, 64, 58, 55, 54, 62, 72, 60, 45, 36, 33, 28, 26, 25, 23, 22, 20, 18],
  [72, 85, 92, 90, 90, 85, 72, 62, 55, 50, 48, 47, 44, 44, 38, 34, 33, 30, 28, 26, 23, 21, 19, 17, 15],
  [58, 72, 82, 80, 80, 80, 75, 62, 52, 46, 44, 42, 42, 40, 37, 34, 32, 30, 28, 25, 22, 18, 16, 16, 15],
  [50, 55, 60, 60, 62, 64, 64, 62, 56, 48, 44, 42, 42, 46, 38, 32, 32, 29, 26, 23, 20, 17, 15, 14, 14],
]
const COLS = 25, ROWS = 17
const cubic = (a: number, b: number, c: number, d: number, t: number) =>
  b + 0.5 * t * (c - a + t * (2 * a - 5 * b + 4 * c - d + t * (3 * (b - c) + d - a)))
const cell = (r: number, c: number) => terrain[Math.max(0, Math.min(ROWS - 1, r))][Math.max(0, Math.min(COLS - 1, c))]
function height(u: number, v: number): number {
  const x = u * (COLS - 1), y = v * (ROWS - 1), i = Math.floor(x), j = Math.floor(y)
  const row = (r: number) => cubic(cell(r, i - 1), cell(r, i), cell(r, i + 1), cell(r, i + 2), x - i)
  return cubic(row(j - 1), row(j), row(j + 1), row(j + 2), y - j)
}
const hash = (x: number, y: number) => {
  const s = Math.sin(x * 127.1 + y * 311.7) * 43758.5453
  return s - Math.floor(s)
}
function noise(x: number, y: number): number {
  const i = Math.floor(x), j = Math.floor(y), a = x - i, b = y - j
  return (hash(i, j) * (1 - a) + hash(i + 1, j) * a) * (1 - b) + (hash(i, j + 1) * (1 - a) + hash(i + 1, j + 1) * a) * b
}

// Local features: gray, opacity, softness, then x,y pairs on a 1534 x 1528 plane.
type Feature = [number, number, number, number[]]
const features: Feature[] = [
  [98, .35, 1, [125, 100, 165, 130, 225, 500, 340, 490, 420, 500, 420, 530, 330, 505, 215, 530, 175, 400]],
  [148, .45, 2, [165, 120, 250, 250, 330, 320, 400, 330, 440, 280, 500, 200, 560, 230, 510, 260, 450, 340, 390, 375, 320, 355, 240, 290]],
  [200, .3, 2, [440, 190, 490, 115, 550, 90, 610, 110, 660, 220, 690, 360, 650, 330, 600, 180, 540, 130, 490, 150]],
  [98, .45, 4, [460, 350, 490, 320, 520, 400, 540, 500, 600, 580, 560, 600, 480, 540, 440, 430]],
  [165, .35, 2, [525, 290, 560, 330, 620, 520, 720, 640, 690, 660, 600, 560, 550, 440]],
  [68, .5, 3, [450, 690, 480, 700, 580, 830, 640, 960, 720, 1130, 660, 1080, 600, 950]],
  [120, .3, 2, [520, 560, 580, 620, 640, 780, 730, 960, 860, 1010, 960, 980, 1060, 850, 1150, 740, 1140, 800, 1010, 980, 900, 1030, 760, 1020, 660, 900]],
  [66, .5, 3, [310, 1110, 340, 1100, 440, 1180, 500, 1330, 560, 1420, 500, 1390, 440, 1290]],
  [56, .5, 2, [0, 1380, 90, 1450, 250, 1500, 250, 1528, 0, 1528]],
  [72, .5, 3, [230, 1365, 280, 1365, 270, 1460, 235, 1430]],
  [88, .35, 2, [20, 730, 60, 720, 110, 800, 190, 900, 190, 1010, 110, 940, 60, 830]],
  [125, .75, 1, [122, 690, 140, 685, 155, 720, 140, 728, 125, 715]],
  [112, .7, 1, [210, 680, 245, 655, 262, 665, 245, 700]],
  [165, .8, 0, [738, 920, 760, 920, 755, 965, 737, 965]],
  [150, .35, 1, [1040, 50, 1120, 110, 1130, 190, 1110, 100]],
  [135, .4, 2, [1225, 110, 1250, 100, 1240, 160, 1250, 210, 1225, 205]],
  [150, .4, 3, [1060, 220, 1170, 310, 1140, 320, 1075, 270]],
  [92, .5, 1, [1390, 0, 1415, 0, 1400, 180, 1385, 400, 1365, 600, 1340, 640, 1370, 400]],
  [68, .65, 1, [1485, 0, 1534, 0, 1534, 210, 1440, 185, 1470, 100]],
  [76, .6, 1, [1385, 520, 1400, 450, 1440, 425, 1534, 450, 1534, 495, 1455, 465, 1415, 480]],
  [36, .75, 1, [1460, 765, 1534, 725, 1534, 890, 1480, 880]],
  [34, .3, 5, [1010, 970, 1130, 930, 1180, 900, 1320, 890, 1400, 860, 1534, 880, 1534, 1528, 1000, 1528, 930, 1240, 1030, 1180]],
  [255, 1, 0, [420, 0, 423, 0, 423, 3, 420, 3]],
]
// South-east quarter on its own 1568 x 1568 plane, offset into the sheet.
const southEast: Feature[] = [
  [150, .25, 2, [690, 80, 740, 20, 860, 0, 840, 100, 700, 330, 540, 560, 520, 540, 660, 250]],
  [115, .5, 1, [690, 60, 740, 25, 760, 60, 700, 130]],
  [90, .4, 2, [850, 100, 880, 20, 960, 200, 900, 330, 800, 340]],
  [92, .6, 1, [270, 700, 350, 700, 340, 770, 270, 760]],
  [60, .5, 1, [120, 800, 125, 940, 60, 850]],
  [44, .8, 1, [590, 560, 650, 500, 700, 520, 760, 520, 840, 430, 960, 400, 960, 480, 940, 570, 860, 540, 740, 600, 660, 600, 640, 690, 610, 670]],
  [82, .6, 1, [660, 520, 760, 470, 800, 500, 730, 540, 690, 560]],
  [62, .8, 1, [820, 590, 930, 520, 920, 640, 850, 630]],
  [34, .7, 1, [1010, 500, 1040, 510, 1080, 700, 930, 620, 980, 590]],
  [40, .6, 1, [1080, 560, 1190, 500, 1210, 650, 1150, 720, 1080, 740]],
  [66, .6, 1, [990, 450, 1040, 405, 1050, 450, 1020, 490]],
  [28, .7, 1, [1220, 560, 1330, 470, 1370, 560, 1400, 700, 1220, 720]],
  [28, .6, 1, [1380, 360, 1440, 420, 1360, 560, 1330, 470]],
  [44, .7, 1, [760, 700, 880, 650, 920, 720, 870, 820, 760, 820]],
  [32, .8, 0, [760, 720, 800, 680, 850, 650, 840, 710, 780, 750]],
  [8, .9, 1, [770, 630, 805, 615, 805, 645, 780, 665, 765, 650]],
  [44, .7, 1, [425, 780, 440, 780, 480, 930, 455, 900]],
  [40, .7, 1, [490, 730, 530, 790, 580, 880, 500, 830]],
  [30, .7, 1, [500, 940, 590, 900, 620, 1020, 500, 1050]],
  [18, .95, 0, [630, 850, 655, 828, 680, 860, 722, 1000, 715, 1050, 695, 1040, 670, 940, 640, 900]],
  [42, .8, 1, [610, 930, 660, 920, 680, 990, 630, 1030]],
  [44, .95, 0, [1335, 770, 1380, 790, 1460, 730, 1492, 850, 1488, 905, 1400, 940, 1385, 950, 1355, 890]],
  [12, .95, 0, [1430, 910, 1475, 900, 1468, 1030, 1445, 1030, 1445, 960, 1420, 980, 1400, 940]],
  [38, .5, 1, [1380, 650, 1568, 520, 1568, 590, 1400, 690]],
  [8, .7, 1, [1460, 1100, 1568, 1040, 1540, 1110]],
  [38, .9, 0, [1315, 1320, 1380, 1260, 1410, 1290, 1405, 1350, 1350, 1400, 1320, 1380]],
  [0, 1, 0, [1240, 1340, 1268, 1350, 1285, 1470, 1260, 1503, 1240, 1490, 1262, 1440]],
  [26, .9, 0, [350, 1220, 390, 1205, 390, 1225, 360, 1243]],
  [60, .55, 1, [130, 1240, 180, 1190, 200, 1310, 265, 1350, 210, 1430, 180, 1400]],
  [68, .8, 1, [290, 1568, 340, 1480, 362, 1568]],
  [32, .4, 1, [390, 1500, 560, 1370, 600, 1400, 620, 1568, 400, 1568]],
  [22, .7, 1, [610, 1430, 640, 1430, 660, 1550, 630, 1530]],
  [42, .7, 1, [765, 1450, 845, 1425, 840, 1490, 795, 1525]],
  [36, .5, 1, [120, 1130, 250, 1160, 340, 1210, 240, 1200, 150, 1180]],
  [255, 1, 0, [1554, 380, 1568, 380, 1568, 398, 1554, 398]],
]
for (const [g, a, s, pts] of southEast) {
  features.push([g, a, s, pts.map((p, i) => (i % 2 ? p * .5497 + 666 : p * .536 + 694))])
}

const dem = ref<HTMLCanvasElement | null>(null)
onMounted(() => {
  const cv = dem.value
  const ctx = cv?.getContext('2d')
  if (!cv || !ctx) return
  const W = cv.width, H = cv.height
  const base = ctx.createImageData(W, H)
  for (let y = 0; y < H; y++) {
    for (let x = 0; x < W; x++) {
      const o = (y * W + x) * 4
      const wx = x + (noise(x / 9, y / 9) - .5) * 7, wy = y + (noise(x / 9 + 50, y / 9) - .5) * 7
      const g = height(Math.max(0, Math.min(1, wx / (W - 1))), Math.max(0, Math.min(1, wy / (H - 1))))
      base.data[o] = base.data[o + 1] = base.data[o + 2] = g
      base.data[o + 3] = 255
    }
  }
  ctx.putImageData(base, 0, 0)
  for (const [g, a, soft, pts] of features) {
    ctx.save()
    ctx.filter = soft ? `blur(${soft}px)` : 'none'
    ctx.fillStyle = `rgba(${g},${g},${g},${a})`
    ctx.beginPath()
    for (let i = 0; i < pts.length; i += 2) ctx.lineTo(pts[i] / 1534 * W, pts[i + 1] / 1528 * H)
    ctx.fill()
    ctx.restore()
  }
  // Flat facets: pull every pixel part of the way to its nearest seed point.
  const src = ctx.getImageData(0, 0, W, H)
  const out = ctx.createImageData(W, H)
  const S = 4
  for (let y = 0; y < H; y++) {
    for (let x = 0; x < W; x++) {
      const cx = Math.floor(x / S), cy = Math.floor(y / S)
      let best = 1e9, bx = x, by = y
      for (let j = -1; j <= 1; j++) for (let i = -1; i <= 1; i++) {
        const sx = (cx + i + hash(cx + i, cy + j)) * S, sy = (cy + j + hash(cy + j + 9, cx + i + 4)) * S
        const d = (sx - x) ** 2 + (sy - y) ** 2
        if (d < best) { best = d; bx = sx; by = sy }
      }
      bx = Math.max(0, Math.min(W - 1, Math.round(bx)))
      by = Math.max(0, Math.min(H - 1, Math.round(by)))
      const o = (y * W + x) * 4, s = (by * W + bx) * 4
      const g = src.data[o] * .7 + src.data[s] * .3
      out.data[o] = out.data[o + 1] = out.data[o + 2] = g >= 252 ? g : g + (hash(bx, by) - .5) * (1 + g / 60)
      out.data[o + 3] = 255
    }
  }
  ctx.putImageData(out, 0, 0)
})
</script>

<template>
  <div class="app">
    <div class="notch"></div>
    <div v-for="(row, ri) in [rowOne, rowTwo]" :key="ri" class="toolrow">
      <div v-for="(bar, bi) in row" :key="bi" class="bar">
        <span class="grip"><i v-for="n in 12" :key="n"></i></span>
        <template v-for="t in bar" :key="t.icon">
          <span v-if="t.sep" class="sep"></span>
          <span class="btn" :class="{ active: t.active, off: t.off, checked: t.checked }">
            <svg class="ic" viewBox="0 0 24 24" fill="none" v-html="icons[t.icon]"></svg>
            <b v-if="t.icon === 'edits'" class="corner"></b>
          </span>
          <span v-if="t.menu" class="menu"></span>
        </template>
      </div>
    </div>
    <div class="body">
      <aside>
        <section class="dock browser">
          <header><span>Browser</span><svg viewBox="0 0 22 22" v-html="icons.float"></svg><svg viewBox="0 0 22 22" v-html="icons.close"></svg></header>
          <div class="mini"><svg v-for="t in browserTools" :key="t" viewBox="0 0 24 24" fill="none" v-html="icons[t]"></svg></div>
          <div class="tree">
            <div v-for="n in nodes" :key="n.label" class="node">
              <span class="tw"><i v-if="n.arrow"></i></span>
              <svg viewBox="0 0 24 24" fill="none" v-html="icons[n.icon]"></svg><span class="txt">{{ n.label }}</span>
            </div>
          </div>
        </section>
        <div class="hsplit"><i v-for="n in 6" :key="n"></i></div>
        <section class="dock layers">
          <header><span>Layers</span><svg viewBox="0 0 22 22" v-html="icons.float"></svg><svg viewBox="0 0 22 22" v-html="icons.close"></svg></header>
          <div class="mini">
            <template v-for="t in layerTools" :key="t">
              <svg viewBox="0 0 24 24" fill="none" v-html="icons[t]"></svg>
              <span v-if="t === 'filterExp'" class="drop"></span>
            </template>
          </div>
          <div class="tree">
            <div class="layer sel"><span class="tw2"><i></i></span><span class="chk dark"><svg viewBox="0 0 28 28"><path d="M7 15l5 7 8-16" /></svg></span><svg class="ras" viewBox="0 0 24 24" v-html="icons.raster"></svg><span class="name u">Filled</span></div>
            <div class="layer"><span class="sw" style="background: #000"></span><span class="num">285.2</span></div>
            <div class="layer"><span class="sw" style="background: #fff"></span><span class="num">413.31</span></div>
            <div class="layer"><span class="tw2"></span><span class="chk"><svg viewBox="0 0 28 28"><path d="M7 15l5 7 8-16" /></svg></span><svg class="ras" viewBox="0 0 24 24" v-html="icons.raster"></svg><span class="name">dtm</span></div>
          </div>
        </section>
      </aside>
      <div class="vsplit"><i v-for="n in 6" :key="n"></i></div>
      <main><canvas ref="dem" width="367" height="234"></canvas></main>
    </div>
    <footer>
      <div class="field locate">
        <svg width="26" height="28" viewBox="0 0 26 28" fill="none" stroke="#8f8f8f" stroke-width="2.200"><circle cx="10.500" cy="11" r="9" /><path d="M17 18l7 8" stroke-width="3" /></svg>
        <span>Type to locate (⌘K)</span>
      </div>
      <span class="ready">Ready</span>
      <span class="lbl coord">Coordinate</span>
      <div class="field xy">512503,5403614</div>
      <svg class="mouse" width="34" height="36" viewBox="0 0 34 36" fill="none"><path d="M12 20c4-3 12 0 16 6 1 5-5 9-9 6z" fill="#c9b8b4" /><path d="M5 7c0-5 8-7 11-2l5 12-9 5c-4-4-7-9-7-15z" fill="#fff" stroke="#000" stroke-width="3" /><path d="M11 4l4 10M8 16l10-4" stroke="#000" stroke-width="2.500" /><circle cx="19" cy="25" r="6" fill="#fff" stroke="#000" stroke-width="2.500" /><circle cx="19" cy="25" r="2" fill="#000" /><path d="M22 9h2M26 6h2M29 3h2M2 20h2M5 25h2" stroke="#000" stroke-width="2" /></svg>
      <span class="lbl scale">Scale</span>
      <div class="field combo"><span>1:8530</span><b><i></i></b></div>
      <svg class="lock" width="26" height="32" viewBox="0 0 26 32"><path d="M6 16V9c0-9 14-9 14 0v7" fill="none" stroke="#b5b5b5" stroke-width="3.500" /><rect x="1" y="14" width="24" height="17" rx="2" fill="#767676" /></svg>
      <span class="lbl mag">Magnifier</span>
      <div class="field spin wide"><span>100%</span><b><i class="up"></i><i class="dn"></i></b></div>
      <span class="lbl rot">Rotation</span>
      <div class="field spin"><span>0.0 °</span><b><i class="up"></i><i class="dn"></i></b></div>
      <span class="chk dark"><svg viewBox="0 0 28 28"><path d="M7 15l5 7 8-16" /></svg></span>
      <span class="lbl ren">Render</span>
      <svg class="crs" width="32" height="30" viewBox="0 0 32 30" fill="none"><path d="M10 1.500h12l5 6 4 6.500-4 3-2 7-6 4.500h-6L7 24l-2-7-4-3 4-6.500z" fill="#c8c8c8" /><path d="M2 13.500h28M6 8h20M5 19h22M7 24h18M16 1v28M11 1c-4 8-4 19 1 28M21 1c4 8 4 19-1 28M7 9l1 12M25 9l-1 12" stroke="#444" stroke-width="1" /></svg>
      <span class="lbl epsg">EPSG:32632</span>
      <svg class="msg" width="34" height="32" viewBox="0 0 34 32"><path d="M17 1c20 0 20 22 6 25 2 2 4 4 8 5-6 0-10-1-13-4C-4 27-4 1 17 1z" fill="#767676" /><g fill="#fff"><circle cx="9" cy="14" r="2.300" /><circle cx="16.500" cy="14" r="2.300" /><circle cx="24" cy="14" r="2.300" /></g></svg>
    </footer>
  </div>
</template>

<style>
body { margin: 0; background: #323232; }
</style>
<style scoped>
* { box-sizing: border-box; }
.app { width: 2940px; height: 1912px; overflow: hidden; display: flex; flex-direction: column; background: #323232; color: #fff; font: 24px Inter, "Noto Sans", "DejaVu Sans", sans-serif; }
.notch { height: 72px; background: #000; flex: none; }
.toolrow { height: 78px; flex: none; display: flex; border-top: 1px solid #7b7b7b; border-bottom: 2px solid #262626; background: linear-gradient(#363636, #303030); }
.toolrow + .toolrow { height: 77px; }
.bar { display: flex; align-items: center; padding: 0 6px 0 10px; border-right: 1px solid #3e3e3e; }
.bar:last-child { border-right: 0; }
.grip { width: 10px; margin-right: 5px; display: grid; grid-template-columns: 4px 4px; gap: 2px; }
.grip i { width: 4px; height: 4px; background: #777; border-top: 1px solid #999; }
.btn { width: 66px; height: 62px; flex: none; display: flex; align-items: center; justify-content: center; position: relative; }
.ic { width: 48px; height: 48px; overflow: visible; flex: none; }
.btn.active { width: 62px; margin: 0 2px; background: #252525; border: 3px solid #4a4a4a; outline: 2px solid #262626; outline-offset: -1px; border-radius: 5px; }
.btn.off .ic { opacity: .32; filter: saturate(.6); }
.btn.checked { width: 48px; height: 40px; margin: 0 9px; background: #67707b; border: 2px solid #1766dd; }
.corner { position: absolute; right: 6px; bottom: 4px; border: 6px solid transparent; border-top-color: #bbb; border-bottom: 0; }
.menu { width: 24px; padding-left: 3px; }
.menu::before, .drop::before { content: ""; display: block; width: 0; border: 8px solid transparent; border-top-color: #ababab; border-bottom: 0; }
.sep { width: 14px; height: 38px; border-left: 1px solid #292929; margin-left: 7px; margin-right: -7px; }
.body { display: flex; height: 1623px; flex: none; padding-top: 3px; padding-right: 2px; }
aside { width: 587px; flex: none; display: flex; flex-direction: column; }
.dock { display: flex; flex-direction: column; }
.browser { height: 855px; }
header { display: flex; height: 34px; flex: none; align-items: center; padding-left: 8px; font-size: 22px; color: #dedede; }
header span { flex: 1; }
header svg { width: 22px; height: 22px; margin-right: 6px; }
header svg:last-child { margin-right: 3px; }
.mini { display: flex; height: 65px; flex: none; align-items: center; padding-left: 16px; gap: 18.200px; }
.mini svg { width: 32px; height: 32px; overflow: visible; flex: none; }
.drop { width: 17px; margin: 0 -3px; margin-left: -8px; }
.tree { flex: 1; background: #1e1e1e; border: 1px solid #292929; border-left: 2px solid #2c2c2c; font-size: 25.200px; -webkit-text-stroke: .2px #fff; }
.node { height: 36px; display: flex; align-items: center; }
.node svg { width: 32px; height: 32px; margin-right: 12px; }
.txt { padding-bottom: 2px; }
.tw { width: 46px; padding-left: 16px; }
.tw i { display: block; width: 0; border: 8px solid transparent; border-left-color: #a8a8a8; border-right: 0; }
.hsplit { height: 14px; flex: none; display: flex; gap: 2px; align-items: center; justify-content: center; padding-left: 8px; }
.hsplit i, .vsplit i { width: 4px; height: 4px; background: #868686; }
.layers { flex: 1; }
.layers header { height: 36px; }
.layers .mini { height: 64px; padding-bottom: 3px; }
.layer { height: 36px; display: flex; align-items: center; }
.num { letter-spacing: .9px; padding-bottom: 1px; }
.sel { background: #464646; }
.tw2 { width: 46px; padding-left: 12px; }
.tw2 i { display: block; width: 0; border: 8px solid transparent; border-top-color: #b5b5b5; border-bottom: 0; }
.chk { width: 28px; height: 28px; flex: none; border: 1.500px solid #272727; background: #1e1e1e; border-radius: 2px; display: flex; }
.chk svg { width: 100%; height: 100%; fill: none; stroke: #c4c4c4; stroke-width: 2.600; }
.ras { width: 26px; height: 26px; margin: 0 14px 0 16px; }
.ras :deep(.gap) { fill: #1e1e1e; }
.sel .ras { opacity: .85; }
.sel .ras :deep(.gap) { fill: #4b4b4b; }
.name { font-weight: 700; font-size: 25px; color: #dedede; -webkit-text-stroke: 0; padding-bottom: 2px; }
.u { color: #fff; letter-spacing: .3px; text-decoration: underline; text-decoration-thickness: 3px; text-underline-offset: 3px; text-decoration-skip-ink: none; }
.sw { width: 32px; height: 32px; margin-left: 86px; margin-right: 12px; }
.vsplit { width: 15px; flex: none; border-right: 2px solid #282828; display: flex; flex-direction: column; gap: 2px; align-items: center; justify-content: center; padding: 8px 0 0 3px; }
main { flex: 1; background: #fff; display: flex; align-items: center; justify-content: center; }
canvas { width: 1468px; height: 936px; image-rendering: pixelated; }
footer { flex: 1; display: flex; align-items: center; padding: 2px 0 0 8px; font-size: 22.500px; -webkit-text-stroke: .2px currentColor; border-top: 1px solid #292929; white-space: nowrap; }
footer > * { flex: none; }
.field { height: 44px; background: #1e1e1e; border: 2px solid #272727; border-radius: 4px; display: flex; align-items: center; overflow: hidden; }
.locate { width: 432px; height: 48px; padding-left: 15px; gap: 15px; font-size: 25.500px; color: #929292; }
.ready { color: #000; width: 730px; margin-left: 16px; font-size: 22px; }
.coord { width: 123px; font-size: 22.300px; }
.xy { width: 220px; justify-content: center; letter-spacing: .4px; }
.mouse { margin: 0 24px 0 9px; }
.scale { width: 65px; }
.combo { width: 185px; height: 47px; border-color: #484848; padding-left: 5px; }
.combo span { letter-spacing: -.2px; }
.field b { margin-left: auto; align-self: stretch; width: 28px; background: linear-gradient(#4c4c4c, #3c3c3c); border: 2px solid #555; border-left: 0; display: flex; flex-direction: column; align-items: center; justify-content: center; gap: 10px; border-radius: 0 3px 3px 0; }
.combo b { width: 40px; border: 0; }
.combo i { border: 8px solid transparent; border-top-color: #1c1c1c; border-bottom: 0; }
.lock { margin: 0 17px 0 24px; }
.mag { width: 105px; }
.spin { width: 186px; padding-left: 9px; }
.wide { width: 195px; margin-right: 18px; }
.up { border: 7.500px solid transparent; border-bottom-color: #ababab; border-top: 0; }
.dn { border: 7.500px solid transparent; border-top-color: #ababab; border-bottom: 0; }
.rot { width: 105px; }
footer .chk { margin: 0 11px 0 14px; width: 26px; }
.ren { width: 104px; color: #dedede; font-size: 22px; }
.crs { margin-right: 5px; }
.epsg { width: 179px; color: #dedede; font-size: 22.300px; }
</style>
